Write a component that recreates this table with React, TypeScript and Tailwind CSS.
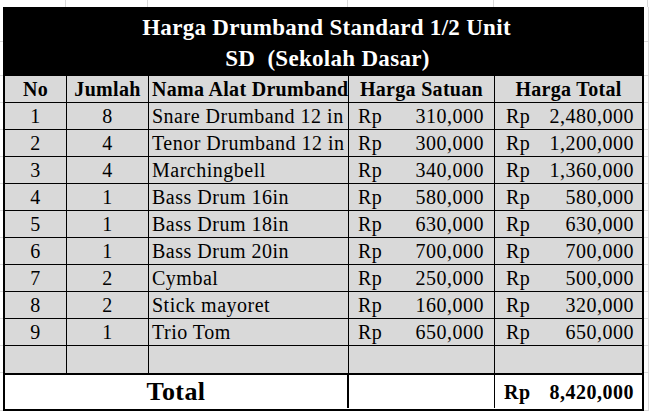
import React from "react";

const rows = [
  { no: "1", qty: "8", name: "Snare Drumband 12 in", unit: "310,000", total: "2,480,000" },
  { no: "2", qty: "4", name: "Tenor Drumband 12 in", unit: "300,000", total: "1,200,000" },
  { no: "3", qty: "4", name: "Marchingbell", unit: "340,000", total: "1,360,000" },
  { no: "4", qty: "1", name: "Bass Drum 16in", unit: "580,000", total: "580,000" },
  { no: "5", qty: "1", name: "Bass Drum 18in", unit: "630,000", total: "630,000" },
  { no: "6", qty: "1", name: "Bass Drum 20in", unit: "700,000", total: "700,000" },
  { no: "7", qty: "2", name: "Cymbal", unit: "250,000", total: "500,000" },
  { no: "8", qty: "2", name: "Stick mayoret", unit: "160,000", total: "320,000" },
  { no: "9", qty: "1", name: "Trio Tom", unit: "650,000", total: "650,000" },
];

const cols = "grid grid-cols-[62px_82px_200px_146px_147px]";
const cell = "h-[27px] border-b border-black flex items-center whitespace-nowrap overflow-hidden";

// sheet row heights outside the table (faint gridlines)
const sheetRows = [35, 34, 27, 27, 27, 27, 27, 27, 27, 27, 27, 27, 27, 38];

function Money({ value, bold = false, padR }: { value: string; bold?: boolean; padR: string }) {
  return (
    <div className={`flex h-full w-full items-center justify-between ${padR} ${bold ? "font-bold" : ""}`}>
      <span>Rp</span>
      <span>{value}</span>
    </div>
  );
}

function SheetStrip({ className }: { className: string }) {
  return (
    <div className={`flex flex-col ${className}`}>
      {sheetRows.map((h, i) => (
        <div key={i} className="border-b border-[#dadada]" style={{ height: h }} />
      ))}
    </div>
  );
}

export default function App() {
  return (
    <div className="relative h-[417px] w-[650px] overflow-hidden bg-white font-['Liberation_Serif',serif] text-black">
      {/* faint sheet gridlines around the table */}
      <div className="flex h-[7px]">
        <div className="w-[66px] border-r border-[#dadada]" />
        <div className="w-[82px] border-r border-[#dadada]" />
        <div className="w-[200px] border-r border-[#dadada]" />
        <div className="w-[146px] border-r border-[#dadada]" />
        <div className="w-[150px]" />
        <div className="w-[4px] border-r border-[#dadada]" />
      </div>

      <div className="flex">
        <SheetStrip className="w-[3px]" />

        <div className="w-[641px] border-2 border-black">
          {/* title */}
          <div className="flex h-[67px] flex-col bg-black text-[23px] font-bold leading-none tracking-[0.3px] text-white">
            <div className="flex h-[34px] items-center justify-center pl-[6px] pt-[3px]">Harga Drumband Standard 1/2 Unit</div>
            <div className="flex h-[33px] items-center justify-center pl-[8px] pb-[3px]">
              SD&nbsp;&nbsp;(Sekolah Dasar)
            </div>
          </div>

          {/* header */}
          <div className={`${cols} bg-[#d9d9d9] text-[20px] font-bold tracking-[0.3px]`}>
            <div className={`${cell} justify-center border-r`}>No</div>
            <div className={`${cell} justify-center border-r`}>Jumlah</div>
            <div className={`${cell} border-r pl-[3px]`}>Nama Alat Drumband</div>
            <div className={`${cell} justify-center border-r`}>Harga Satuan</div>
            <div className={`${cell} justify-center`}>Harga Total</div>
          </div>

          {/* items */}
          {rows.map((r) => (
            <div key={r.no} className={`${cols} bg-[#d9d9d9] text-[20px] tracking-[0.5px]`}>
              <div className={`${cell} justify-center border-r`}>{r.no}</div>
              <div className={`${cell} justify-center border-r`}>{r.qty}</div>
              <div className={`${cell} border-r pl-[3px]`}>{r.name}</div>
              <div className={`${cell} border-r pl-[9px]`}>
                <Money value={r.unit} padR="pr-[10px]" />
              </div>
              <div className={`${cell} pl-[11px]`}>
                <Money value={r.total} padR="pr-[8px]" />
              </div>
            </div>
          ))}

          {/* empty row */}
          <div className={`${cols} bg-[#d9d9d9]`}>
            <div className="h-[27px] border-r border-black" />
            <div className="h-[27px] border-r border-black" />
            <div className="h-[27px] border-r border-black" />
            <div className="h-[27px] border-r border-black" />
            <div className="h-[27px]" />
          </div>

          {/* total */}
          <div className="grid grid-cols-[344px_146px_147px] border-t-2 border-black bg-white">
            <div className="flex h-[33px] items-center justify-center border-r-2 border-black text-[26px] font-bold tracking-[0.4px]">
              Total
            </div>
            <div className="h-[33px] border-r border-black" />
            <div className="flex h-[33px] items-center pl-[9px] text-[20px] tracking-[0.5px]">
              <Money value="8,420,000" bold padR="pr-[8px]" />
            </div>
          </div>
        </div>

        <SheetStrip className="w-[5px] border-r border-[#dadada]" />
      </div>
    </div>
  );
}
